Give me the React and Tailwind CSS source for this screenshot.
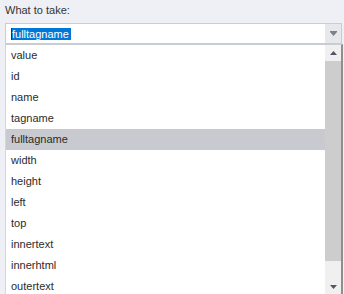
const items = [
  "value",
  "id",
  "name",
  "tagname",
  "fulltagname",
  "width",
  "height",
  "left",
  "top",
  "innertext",
  "innerhtml",
  "outertext",
];

const selected = "fulltagname";

const Arrow = ({ up, color }) => (
  <svg width="7" height="4" viewBox="0 0 7 4">
    <polygon points={up ? "0,4 7,4 3.5,0" : "0,0 7,0 3.5,4"} fill={color} />
  </svg>
);

export default function App() {
  return (
    <div
      className="w-[344px] h-[294px] overflow-hidden bg-[#eef0f5] text-[11px] text-[#2b2b2b]"
      style={{ fontFamily: '"Liberation Sans", Arial, sans-serif' }}>
      <div className="h-[23px] pl-[5px] pt-[3px] leading-[14px] text-[#333]">
        What to take:
      </div>

      {/* combobox */}
      <div className="ml-[5px] w-[337px] h-[21px] flex border border-[#c8ccd3] bg-white">
        <div className="flex-1 flex items-center pl-[5px]">
          <span className="bg-[#0078d7] text-white leading-[12px] h-[12px] pr-[2px] border-l border-[#4a2a10]">
            {selected}
          </span>
        </div>
        <div className="w-[16px] bg-[#e7e8eb] flex items-center justify-center">
          <div className="flex flex-col items-center">
            <div className="w-[7px] h-[1px] bg-[#7a808c]" />
            <Arrow color="#7a808c" />
          </div>
        </div>
      </div>

      {/* dropdown list */}
      <div className="ml-[5px] w-[338px] h-[251px] flex border-t border-t-[#c8ccd3] border-l border-l-[#d3d6dc] border-r-2 border-r-[#8e8e90] bg-white overflow-hidden">
        <div className="w-[319px] flex flex-col">
          {items.map((item) => (
            <div
              key={item}
              className={`h-[21px] shrink-0 flex items-center pl-[5px] ${
                item === selected ? "bg-[#c9cacf]" : ""
              }`}>
              {item}
            </div>
          ))}
        </div>
        <div className="w-[16px] flex flex-col bg-[#f0f0f0]">
          <div className="h-[16px] shrink-0 flex items-center justify-center">
            <Arrow up color="#505663" />
          </div>
          <div className="h-[200px] shrink-0 bg-[#cdcdcd]" />
          <div className="h-[17px] shrink-0" />
          <div className="h-[17px] shrink-0 flex items-center justify-center">
            <Arrow color="#505663" />
          </div>
        </div>
      </div>
    </div>
  );
}
